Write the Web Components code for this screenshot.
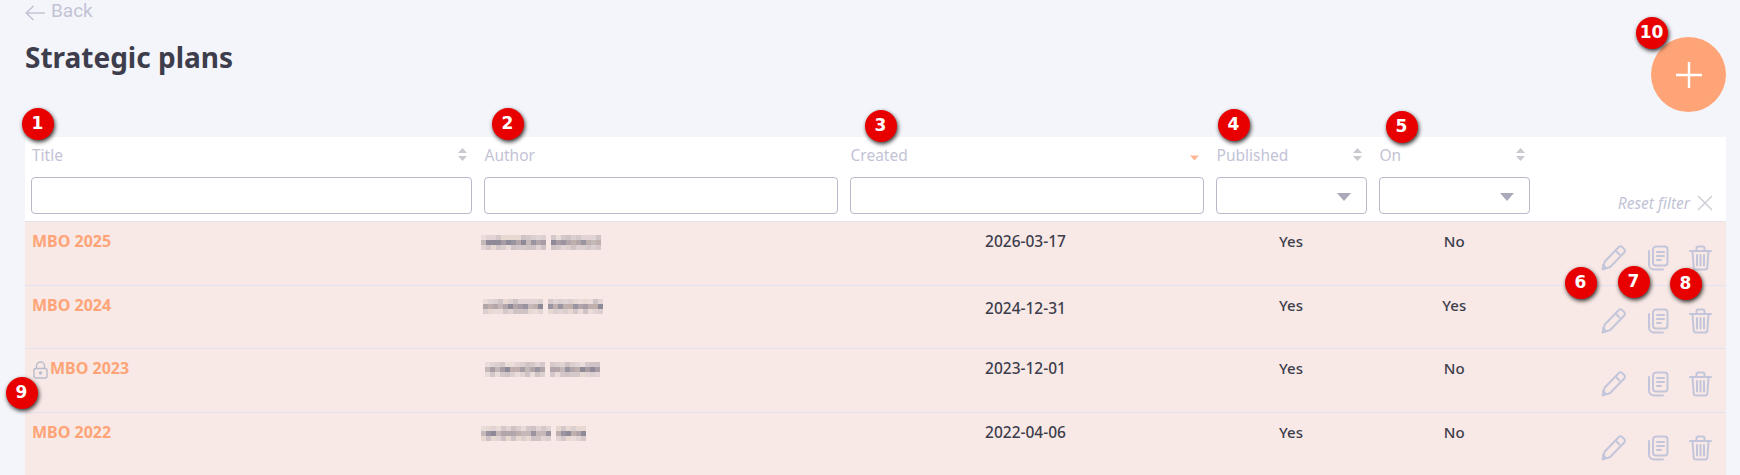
<!DOCTYPE html>
<html lang="en">
<head>
<meta charset="utf-8">
<title>Strategic plans</title>
<style>
  html, body { margin: 0; padding: 0; height: 475px; overflow: hidden; background: #f4f5fa; }
  body { font-family: "Noto Sans", "Liberation Sans", sans-serif; position: relative; --cols: 452.5px 366px 366px 163px 163.5px 190px; }
</style>
</head>
<body>
<plans-page>
  <page-head slot="head" heading="Strategic plans"></page-head>
  <plans-table>
    <table-head></table-head>
    <plan-row title="MBO 2025" seed="7" name="13;10" indent="3.500" created="2026-03-17" action-shift="1" published="Yes" on="No"></plan-row>
    <plan-row title="MBO 2024" seed="31" name="12;11" indent="5.500" created="2024-12-31" date-shift="3" published="Yes" on="Yes"></plan-row>
    <plan-row title="MBO 2023" locked seed="53" name="12;10" indent="7.500" created="2023-12-01" published="Yes" on="No"></plan-row>
    <plan-row title="MBO 2022" seed="91" name="14;6" indent="3.500" created="2022-04-06" published="Yes" on="No"></plan-row>
  </plans-table>
</plans-page>
<note-badge n="1" style="left:37px;top:123px"></note-badge>
<note-badge n="2" style="left:507px;top:123px"></note-badge>
<note-badge n="3" style="left:880px;top:125px"></note-badge>
<note-badge n="4" style="left:1233px;top:124px"></note-badge>
<note-badge n="5" style="left:1401px;top:126px"></note-badge>
<note-badge n="6" style="left:1580px;top:282px"></note-badge>
<note-badge n="7" style="left:1633px;top:281px"></note-badge>
<note-badge n="8" style="left:1685px;top:283px"></note-badge>
<note-badge n="9" style="left:21px;top:392px"></note-badge>
<note-badge n="10" style="left:1651px;top:32px"></note-badge>

<script>
class PlansPage extends HTMLElement {
  constructor() {
    super();
    this.attachShadow({ mode: 'open' });
    this.shadowRoot.innerHTML = `
      <style>
        :host { display: block; padding: 0 14px 0 25px; height: 475px; overflow: hidden; box-sizing: border-box; }
      </style>
      <slot name="head"></slot>
      <slot></slot>
    `;
  }
}

class PageHead extends HTMLElement {
  constructor() {
    super();
    this.attachShadow({ mode: 'open' });
    this.shadowRoot.innerHTML = `
      <style>
        :host { display: flex; justify-content: space-between; align-items: flex-start; height: 137px; }
        .back { display: flex; align-items: center; gap: 6px; height: 22px; color: #c3c3d6; font-family: Roboto, sans-serif; font-size: 19px; line-height: 22px; }
        .back svg { margin-top: 3px; }
        h1 { margin: 19px 0 0; font-size: 28px; line-height: 32px; font-weight: 700; color: #3d3d4c; }
        .add { width: 75px; height: 75px; margin-top: 37px; border-radius: 50%; background: #ffa477; display: flex; align-items: center; justify-content: center; }
      </style>
      <div>
        <div class="back">
          <svg width="20" height="16" viewBox="0 0 20 16" fill="none" stroke="#c3c3d6" stroke-width="1.600"><path d="M20 8H1M8.500 1 1.200 8l7.300 7"/></svg>
          <span>Back</span>
        </div>
        <h1></h1>
      </div>
      <div class="add">
        <svg width="26" height="26" viewBox="0 0 26 26" stroke="#fff" stroke-width="2.400"><path d="M13 0v26M0 13h26"/></svg>
      </div>
    `;
    this.shadowRoot.querySelector('h1').textContent = this.getAttribute('heading');
  }
}

class PlansTable extends HTMLElement {
  constructor() {
    super();
    this.attachShadow({ mode: 'open' });
    this.shadowRoot.innerHTML = `
      <style>
        :host { display: block; background: #fff; }
      </style>
      <slot></slot>
    `;
  }
}

class SortArrows extends HTMLElement {
  constructor() {
    super();
    this.attachShadow({ mode: 'open' });
    const active = this.hasAttribute('active');
    this.shadowRoot.innerHTML = `
      <style>
        :host { display: block; width: 11px; height: 13px; }
        svg { display: block; }
      </style>
      <svg width="11" height="13" viewBox="0 0 11 13">
        ${active
          ? '<path d="M1 7.500h9L5.500 12.500z" fill="#ffb795"/>'
          : '<path d="M5.500 0 10 5H1zM1 8h9l-4.500 5z" fill="#c9c9d0"/>'}
      </svg>
    `;
  }
}

class ColHead extends HTMLElement {
  constructor() {
    super();
    this.attachShadow({ mode: 'open' });
    const sel = this.hasAttribute('select');
    const sort = this.getAttribute('sort');
    this.shadowRoot.innerHTML = `
      <style>
        :host { display: flex; flex-direction: column; padding: 0 6px; min-width: 0; }
        .label { display: flex; justify-content: space-between; align-items: center; height: 40px; padding: 0 4px 5px 1px; box-sizing: border-box; color: #c3c3d6; font-size: 15.500px; }
        .box { height: 37px; box-sizing: border-box; border: 1px solid #b9b9cc; border-radius: 4px; background: #fff; display: flex; align-items: center; justify-content: flex-end; padding: 2px 15px 0 0; }
      </style>
      <div class="label"><span></span>${sort ? `<sort-arrows ${sort === 'active' ? 'active' : ''}></sort-arrows>` : ''}</div>
      <div class="box">${sel ? '<svg width="14" height="8" viewBox="0 0 14 8"><path d="M0 0h14L7 8z" fill="#a9a9bb"/></svg>' : ''}</div>
    `;
    this.shadowRoot.querySelector('span').textContent = this.getAttribute('label');
  }
}

class TableHead extends HTMLElement {
  constructor() {
    super();
    this.attachShadow({ mode: 'open' });
    this.shadowRoot.innerHTML = `
      <style>
        :host { display: grid; grid-template-columns: var(--cols); height: 85px; box-sizing: border-box; border-bottom: 1px solid #e2e2ec; }
        .reset { display: flex; justify-content: flex-end; align-items: center; align-self: end; gap: 7px; height: 35px; padding: 0 13px 2px 0; box-sizing: border-box; color: #c3c3d6; font-size: 15.500px; font-style: italic; }
      </style>
      <col-head label="Title" sort="both"></col-head>
      <col-head label="Author"></col-head>
      <col-head label="Created" sort="active"></col-head>
      <col-head label="Published" sort="both" select></col-head>
      <col-head label="On" sort="both" select></col-head>
      <div class="reset">
        <span>Reset filter</span>
        <svg width="16" height="16" viewBox="0 0 16 16" stroke="#cdcdd6" stroke-width="1.500"><path d="M1 1l14 14M15 1 1 15"/></svg>
      </div>
    `;
  }
}

// blurred name: mosaic of 5px cells, "words" holds the cell count of each word
class BlurName extends HTMLElement {
  constructor() {
    super();
    this.attachShadow({ mode: 'open' });
    let seed = Number(this.getAttribute('seed')) || 1;
    const rnd = () => { seed = (seed * 16807) % 2147483647; return seed / 2147483647; };
    const light = ['#eadcd9', '#e2d4d4', '#dccfcf', '#d4c8ca', '#e8d8d2', '#cfc3c6'];
    const mid = ['#b3a6ab', '#a89da5', '#9a93a0', '#bfb0ae', '#8f8a98', '#c4b8b8'];
    const words = this.getAttribute('words').split(';').map(Number);
    let x = 0;
    let rects = '';
    words.forEach((n) => {
      for (let i = 0; i < n; i++, x += 5) {
        [light, mid, light].forEach((pal, r) => {
          const c = pal[Math.floor(rnd() * pal.length)];
          rects += `<rect x="${x}" y="${r * 5}" width="5" height="5" fill="${c}"/>`;
        });
      }
      x += 5;
    });
    this.shadowRoot.innerHTML = `
      <style>
        :host { display: block; }
        svg { display: block; }
      </style>
      <svg width="${x}" height="15" shape-rendering="crispEdges">${rects}</svg>
    `;
  }
}

class RowActions extends HTMLElement {
  constructor() {
    super();
    this.attachShadow({ mode: 'open' });
    this.shadowRoot.innerHTML = `
      <style>
        :host { display: flex; align-items: flex-start; gap: 20.5px; padding-left: 65px; }
        svg { display: block; fill: none; stroke: #c3c6da; stroke-width: 2; stroke-linejoin: round; stroke-linecap: round; }
      </style>
      <svg width="25" height="26" viewBox="0 0 25 26">
        <path d="M1.500 24.500l2.300-8L17.600 2.200a2.700 2.700 0 0 1 3.800 0l1.600 1.700a2.700 2.700 0 0 1 0 3.800L9.200 22z"/>
        <path d="M5 23l-3-3M15 6l3.500 3.500"/>
      </svg>
      <svg width="22" height="26" viewBox="0 0 22 26">
        <path d="M9 1.500h8.500a3 3 0 0 1 3 3v13a3 3 0 0 1-3 3H9a3 3 0 0 1-3-3v-13a3 3 0 0 1 3-3z"/>
        <path d="M2 6v13.500a5 5 0 0 0 5 5h9"/>
        <path d="M10 7h7M10 11h7M10 15h4"/>
      </svg>
      <svg width="23" height="26" viewBox="0 0 23 26">
        <path d="M1 6h21M7.500 5.500V3a1.500 1.500 0 0 1 1.500-1.500h5A1.500 1.500 0 0 1 15.500 3v2.500"/>
        <path d="M3.500 6.500l1.200 16a2 2 0 0 0 2 2h9.600a2 2 0 0 0 2-2l1.200-16"/>
        <path d="M8 10v10.500M11.500 10v10.500M15 10v10.500"/>
      </svg>
    `;
  }
}

class PlanRow extends HTMLElement {
  constructor() {
    super();
    this.attachShadow({ mode: 'open' });
    const locked = this.hasAttribute('locked');
    const shift = Number(this.getAttribute('date-shift')) || 0;
    const actionShift = Number(this.getAttribute('action-shift')) || 0;
    this.shadowRoot.innerHTML = `
      <style>
        :host { display: grid; grid-template-columns: var(--cols); height: 63.500px; box-sizing: border-box; background: #f8e9e6; border-bottom: 1px solid #e2e2f0; color: #3d3d4c; font-size: 15px; font-weight: 500; }
        :host(:last-child) { height: 70px; border-bottom: none; }
        .cell { padding: 10px 6px 0; line-height: 19px; min-width: 0; }
        .center { text-align: center; }
        .date { font-size: 15.500px; padding-right: 8px; padding-top: ${10 + shift}px; }
        .title { display: flex; align-items: flex-start; color: #ffa477; font-weight: 700; font-size: 16px; padding-left: 7px; }
        .title svg { flex: none; margin: 2px 2px 0 1px; }
        .author { padding: 13px 0 0 ${this.getAttribute('indent')}px; }
        .actions { padding: ${22 + actionShift}px 0 0; }
      </style>
      <div class="cell title">
        ${locked ? '<svg width="15" height="18" viewBox="0 0 15 18" fill="none" stroke="#b9bccd" stroke-width="1.400"><path d="M3.500 7.500V5a4 4 0 0 1 8 0v2.500"/><rect x="1" y="7.500" width="13" height="9.500" rx="2"/><circle cx="7.500" cy="12" r="1" fill="#b9bccd"/></svg>' : ''}
        <span id="t"></span>
      </div>
      <div class="cell author"><blur-name seed="${this.getAttribute('seed')}" words="${this.getAttribute('name')}"></blur-name></div>
      <div class="cell center date" id="c"></div>
      <div class="cell center" id="p"></div>
      <div class="cell center" id="o"></div>
      <div class="actions"><row-actions></row-actions></div>
    `;
    this.shadowRoot.getElementById('t').textContent = this.getAttribute('title');
    this.shadowRoot.getElementById('c').textContent = this.getAttribute('created');
    this.shadowRoot.getElementById('p').textContent = this.getAttribute('published');
    this.shadowRoot.getElementById('o').textContent = this.getAttribute('on');
  }
}

class NoteBadge extends HTMLElement {
  constructor() {
    super();
    this.attachShadow({ mode: 'open' });
    this.shadowRoot.innerHTML = `
      <style>
        :host { position: absolute; width: 32px; height: 32px; margin: -15.500px 0 0 -15.500px; border-radius: 50%; background: #e80000; color: #fff; box-shadow: 1px 2px 4px rgba(0,0,0,.8); display: flex; align-items: center; justify-content: center; font: 800 17px/1 "DejaVu Sans", sans-serif; }
      </style>
      <span></span>
    `;
    this.shadowRoot.querySelector('span').textContent = this.getAttribute('n');
  }
}

customElements.define('plans-page', PlansPage);
customElements.define('page-head', PageHead);
customElements.define('plans-table', PlansTable);
customElements.define('sort-arrows', SortArrows);
customElements.define('col-head', ColHead);
customElements.define('table-head', TableHead);
customElements.define('blur-name', BlurName);
customElements.define('row-actions', RowActions);
customElements.define('plan-row', PlanRow);
customElements.define('note-badge', NoteBadge);
</script>
</body>
</html>
